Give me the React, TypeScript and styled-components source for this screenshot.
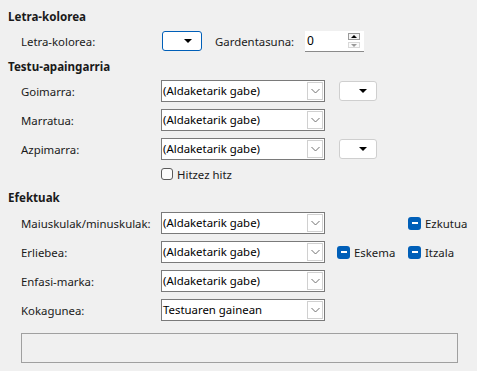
import React from "react";
import styled, { createGlobalStyle } from "styled-components";

const Global = createGlobalStyle`
  html, body { margin: 0; padding: 0; background: #f0f0f0; }
  body { font-family: "Noto Sans", "Open Sans", sans-serif; font-size: 11.4px; color: #1a1a1a; }
`;

const Page = styled.div`
  width: 477px;
  height: 371px;
  box-sizing: border-box;
  padding: 9px 0 0 8px;
  display: flex;
  flex-direction: column;
`;

const Heading = styled.div<{ $mt?: number }>`
  height: 16px;
  line-height: 16px;
  font-weight: 700;
  font-size: 11.6px;
  margin-top: ${(p) => p.$mt ?? 0}px;
`;

const Row = styled.div<{ $mt?: number; $h?: number }>`
  display: flex;
  align-items: center;
  height: ${(p) => p.$h ?? 22}px;
  margin-top: ${(p) => p.$mt ?? 7}px;
  padding-left: 13px;
`;

const Label = styled.div<{ $w?: number }>`
  width: ${(p) => p.$w ?? 140}px;
  flex: none;
  white-space: nowrap;
`;

const ColorBtn = styled.div<{ $focused?: boolean; $w?: number }>`
  box-sizing: border-box;
  width: ${(p) => p.$w ?? 38}px;
  height: 20px;
  background: #fff;
  border: 1px solid ${(p) => (p.$focused ? "#005fb8" : "#cfcfcf")};
  border-radius: 3px;
  display: flex;
  align-items: center;
  justify-content: flex-end;
  padding-right: 9px;
  flex: none;
`;

const Tri = styled.span`
  width: 0;
  height: 0;
  border-left: 4px solid transparent;
  border-right: 4px solid transparent;
  border-top: 4px solid #000;
`;

const Combo = styled.div`
  box-sizing: border-box;
  width: 164px;
  height: 22px;
  background: #fff;
  border: 1px solid #7a7a7a;
  display: flex;
  align-items: stretch;
  flex: none;
`;

const ComboText = styled.div`
  flex: 1;
  padding-left: 1px;
  line-height: 20px;
  color: #000;
  white-space: nowrap;
  overflow: hidden;
`;

const ComboArrow = styled.div`
  box-sizing: border-box;
  width: 16px;
  margin: 1px 1px 1px 0;
  border: 1px solid #d0d0d0;
  display: flex;
  align-items: center;
  justify-content: center;
`;

const Spacer = styled.div<{ $w: number }>`
  width: ${(p) => p.$w}px;
  flex: none;
`;

const Spin = styled.div`
  box-sizing: border-box;
  width: 59px;
  height: 21px;
  background: #fff;
  border-bottom: 1px solid #8a8a8a;
  display: flex;
  align-items: center;
  padding-left: 2px;
  flex: none;
`;

const SpinValue = styled.div`
  flex: 1;
  color: #000;
  font-size: 12px;
`;

const SpinBtns = styled.div`
  display: flex;
  flex-direction: column;
  gap: 2px;
  margin-right: 4px;
`;

const SpinBtn = styled.div<{ $up?: boolean }>`
  box-sizing: border-box;
  width: 12px;
  height: ${(p) => (p.$up ? 7 : 6)}px;
  border: 1px solid ${(p) => (p.$up ? "#9a9a9a" : "#d8d8d8")};
  background: ${(p) => (p.$up ? "#f4f4f4" : "#fafafa")};
  display: flex;
  align-items: center;
  justify-content: center;
`;

const SmallTri = styled.span<{ $up?: boolean; $c: string }>`
  width: 0;
  height: 0;
  border-left: 3px solid transparent;
  border-right: 3px solid transparent;
  ${(p) =>
    p.$up
      ? `border-bottom: 3px solid ${p.$c};`
      : `border-top: 3px solid ${p.$c};`}
`;

const Check = styled.div`
  box-sizing: border-box;
  width: 12px;
  height: 12px;
  border: 1px solid #5a5a5a;
  border-radius: 3px;
  background: #fbfbfb;
  flex: none;
`;

const Tristate = styled.div`
  box-sizing: border-box;
  width: 13px;
  height: 13px;
  border-radius: 3px;
  background: #005fb8;
  display: flex;
  align-items: center;
  justify-content: center;
  flex: none;
  &::after {
    content: "";
    width: 6px;
    height: 1.5px;
    background: #fff;
  }
`;

const CheckItem = styled.div<{ $w?: number }>`
  display: flex;
  align-items: center;
  gap: 4px;
  flex: none;
  ${(p) => (p.$w ? `width: ${p.$w}px;` : "")}
`;

const Preview = styled.div`
  box-sizing: border-box;
  margin: 12px 0 0 13px;
  width: 437px;
  height: 30px;
  border: 1px solid #a0a0a0;
`;

const Chevron = () => (
  <svg width="9" height="6" viewBox="0 0 9 6">
    <path d="M0.5 1 L4.5 5 L8.5 1" fill="none" stroke="#707070" strokeWidth="1" />
  </svg>
);

const ComboBox = ({ text }: { text: string }) => (
  <Combo>
    <ComboText>{text}</ComboText>
    <ComboArrow>
      <Chevron />
    </ComboArrow>
  </Combo>
);

const NONE = "(Aldaketarik gabe)";

export default function App() {
  return (
    <>
      <Global />
      <Page>
        <Heading>Letra-kolorea</Heading>
        <Row $mt={6} $h={20}>
          <Label $w={141}>Letra-kolorea:</Label>
          <ColorBtn $focused $w={40}>
            <Tri />
          </ColorBtn>
          <Spacer $w={13} />
          <Label $w={90}>Gardentasuna:</Label>
          <Spin>
            <SpinValue>0</SpinValue>
            <SpinBtns>
              <SpinBtn $up>
                <SmallTri $up $c="#000" />
              </SpinBtn>
              <SpinBtn>
                <SmallTri $c="#9a9a9a" />
              </SpinBtn>
            </SpinBtns>
          </Spin>
        </Row>
        <Heading $mt={8}>Testu-apaingarria</Heading>
        <Row $mt={5}>
          <Label>Goimarra:</Label>
          <ComboBox text={NONE} />
          <Spacer $w={14} />
          <ColorBtn>
            <Tri />
          </ColorBtn>
        </Row>
        <Row>
          <Label>Marratua:</Label>
          <ComboBox text={NONE} />
        </Row>
        <Row>
          <Label>Azpimarra:</Label>
          <ComboBox text={NONE} />
          <Spacer $w={14} />
          <ColorBtn>
            <Tri />
          </ColorBtn>
        </Row>
        <Row $mt={5} $h={18}>
          <Label />
          <CheckItem>
            <Check />
            <span>Hitzez hitz</span>
          </CheckItem>
        </Row>
        <Heading $mt={7}>Efektuak</Heading>
        <Row $mt={6}>
          <Label>Maiuskulak/minuskulak:</Label>
          <ComboBox text={NONE} />
          <Spacer $w={83} />
          <CheckItem>
            <Tristate />
            <span>Ezkutua</span>
          </CheckItem>
        </Row>
        <Row>
          <Label>Erliebea:</Label>
          <ComboBox text={NONE} />
          <Spacer $w={12} />
          <CheckItem $w={71}>
            <Tristate />
            <span>Eskema</span>
          </CheckItem>
          <CheckItem>
            <Tristate />
            <span>Itzala</span>
          </CheckItem>
        </Row>
        <Row>
          <Label>Enfasi-marka:</Label>
          <ComboBox text={NONE} />
        </Row>
        <Row>
          <Label>Kokagunea:</Label>
          <ComboBox text="Testuaren gainean" />
        </Row>
        <Preview />
      </Page>
    </>
  );
}
